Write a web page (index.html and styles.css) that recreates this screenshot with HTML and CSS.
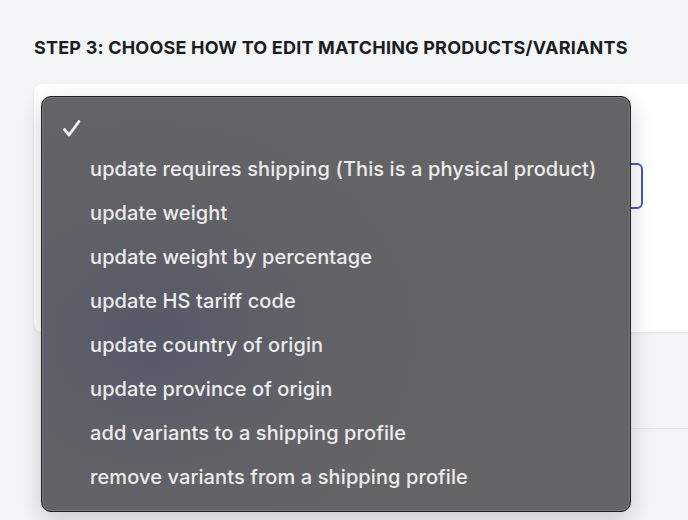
FILE: index.html
```html
<!DOCTYPE html>
<html>
<head>
<meta charset="utf-8">
<link rel="stylesheet" href="styles.css">
</head>
<body>
<div class="page">
  <h2 class="step-title">STEP 3: CHOOSE HOW TO EDIT MATCHING PRODUCTS/VARIANTS</h2>
  <div class="card">
    <div class="field-row">
      <div class="select-box"></div>
    </div>
  </div>
  <div class="next-section"></div>
</div>
<div class="menu">
  <div class="menu-item checked">
    <svg class="check" width="20" height="20" viewBox="0 0 20 20"><polyline points="2.5,10.5 7,16 17,2.5" fill="none" stroke="#f2f2f2" stroke-width="2.8" stroke-linecap="round" stroke-linejoin="round"/></svg>
  </div>
  <div class="menu-item">update requires shipping (This is a physical product)</div>
  <div class="menu-item">update weight</div>
  <div class="menu-item">update weight by percentage</div>
  <div class="menu-item">update HS tariff code</div>
  <div class="menu-item">update country of origin</div>
  <div class="menu-item">update province of origin</div>
  <div class="menu-item">add variants to a shipping profile</div>
  <div class="menu-item">remove variants from a shipping profile</div>
</div>
</body>
</html>
```
FILE: styles.css
```css
html, body {
  margin: 0;
  padding: 0;
  background: #f4f5f7;
  font-family: Inter, "Noto Sans", sans-serif;
  overflow: hidden;
}
.page {
  padding: 37px 0 0 34px;
  height: 520px;
  box-sizing: border-box;
}
.step-title {
  margin: 0;
  font-size: 18px;
  font-weight: 700;
  color: #1c1d21;
  letter-spacing: 0.2px;
  line-height: 21px;
}
.card {
  margin-top: 26px;
  height: 248px;
  background: #ffffff;
  border-radius: 8px 0 0 8px;
  box-shadow: 0 1px 3px rgba(0,0,0,0.08);
  padding-top: 79px;
  box-sizing: border-box;
}
.field-row {
  display: flex;
  justify-content: flex-end;
  padding-right: 45px;
}
.select-box {
  width: 200px;
  height: 42px;
  border: 2px solid #4b56bd;
  border-radius: 6px;
}
.next-section {
  margin-top: 96px;
  margin-left: 8px;
  border-top: 1px solid #e1e2e5;
}
.menu {
  position: absolute;
  left: 41px;
  top: 96px;
  width: 590px;
  height: 416px;
  box-sizing: border-box;
  border-radius: 10px;
  border: 1px solid #1f1f21;
  box-shadow: inset 0 0 0 1px #7a7a7d, 0 8px 24px rgba(0,0,0,0.18);
  background:
    radial-gradient(ellipse 280px 230px at 110px 240px, rgba(84,86,106,0.8), rgba(92,93,106,0.4) 55%, rgba(100,100,102,0) 100%),
    #646466;
  padding-top: 6px;
}
.menu-item {
  height: 44px;
  line-height: 44px;
  padding-left: 48px;
  font-size: 20px;
  font-weight: 500;
  letter-spacing: 0.1px;
  color: #ececec;
  white-space: nowrap;
}
.menu-item.checked {
  position: relative;
}
.check {
  position: absolute;
  left: 20px;
  top: 16px;
}
```
